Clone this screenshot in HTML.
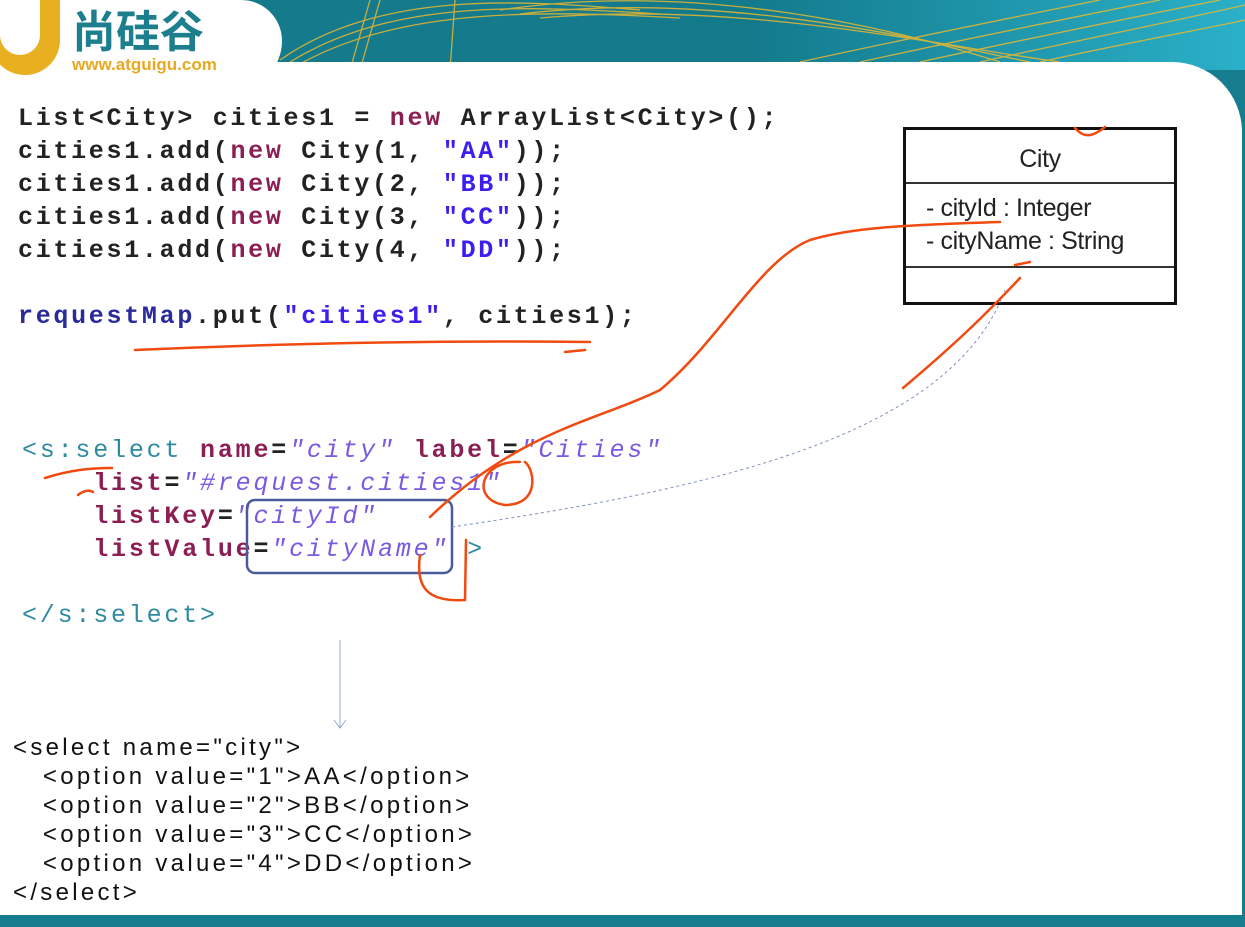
<!DOCTYPE html>
<html><head><meta charset="utf-8"><style>
body{margin:0;width:1245px;height:927px;overflow:hidden;background:#167d8f;position:relative;font-family:"Liberation Sans",sans-serif}
.hdr{position:absolute;left:0;top:0;width:1245px;height:70px;background:linear-gradient(90deg,#167a8c 0%,#137a8c 60%,#2ab0c8 100%)}
.panel{position:absolute;left:0;top:62px;width:1242px;height:853px;background:#fff;border-top-right-radius:70px}
.logo{position:absolute;left:0;top:0;width:282px;height:90px;background:#fff;border-bottom-right-radius:60px;border-top-right-radius:50px}
.code{position:absolute;font-family:"Liberation Mono",monospace;font-weight:bold;font-size:25px;letter-spacing:2.7px;line-height:33px;white-space:pre;color:#222}
.kw{color:#8b1e52}.str{color:#3a1ff0}.blue{color:#2a2a9a}
.t{color:#2e8aa0;font-weight:normal}.a{color:#8b1e52}.v{color:#7a5ae0;font-style:italic;font-weight:normal}
.html{position:absolute;left:13px;top:733px;font-size:24px;line-height:29px;white-space:pre;color:#111;letter-spacing:3.3px}
.uml{position:absolute;left:903px;top:127px;width:268px;height:172px;border:3px solid #111;font-size:25px;color:#222;letter-spacing:-0.4px}
</style></head><body>
<div class="hdr">
<svg width="1245" height="70" style="position:absolute;left:0;top:0">
<g stroke="#e8b830" stroke-width="1.3" fill="none" opacity="0.85">
<path d="M280 60 C380 -10 520 0 640 10"/><path d="M290 62 C390 0 520 5 660 14"/><path d="M300 64 C400 8 540 10 680 18"/>
<path d="M500 10 C700 -20 900 30 1000 62"/><path d="M520 14 C720 -10 920 40 1030 62"/><path d="M540 18 C740 0 940 46 1060 62"/>
<path d="M800 62 C900 40 1000 20 1100 0"/><path d="M860 62 C960 40 1060 20 1160 0"/><path d="M920 62 C1020 40 1120 20 1220 0"/>
<path d="M980 62 C1080 40 1180 20 1245 5"/><path d="M1040 62 C1140 40 1200 30 1245 20"/>
<path d="M350 70 L370 0"/><path d="M360 70 L380 0"/><path d="M450 70 L455 0"/>
</g></svg>
</div>
<div class="panel"></div>
<div class="logo">
<div style="position:absolute;left:-10px;top:-20px;width:70px;height:95px;border-radius:0 0 35px 35px;background:#e8b020"></div>
<div style="position:absolute;left:0;top:-10px;width:40px;height:65px;border-radius:0 0 20px 20px;background:#fff"></div>
<div style="position:absolute;left:72px;top:2px;font-family:'Noto Sans CJK SC',sans-serif;font-size:44px;color:#1d7f8e;font-weight:bold;line-height:52px">尚硅谷</div>
<div style="position:absolute;left:72px;top:55px;font-size:17px;color:#e8a820;font-weight:bold">www.atguigu.com</div>
</div>
<div class="code" style="left:18px;top:102px">List&lt;City&gt; cities1 = <span class="kw">new</span> ArrayList&lt;City&gt;();
cities1.add(<span class="kw">new</span> City(1, <span class="str">"AA"</span>));
cities1.add(<span class="kw">new</span> City(2, <span class="str">"BB"</span>));
cities1.add(<span class="kw">new</span> City(3, <span class="str">"CC"</span>));
cities1.add(<span class="kw">new</span> City(4, <span class="str">"DD"</span>));

<span class="blue">requestMap</span>.put(<span class="str">"cities1"</span>, cities1);</div>
<div class="code" style="left:22px;top:434px;letter-spacing:2.8px"><span class="t">&lt;s:select</span> <span class="a">name</span>=<span class="v">"city"</span> <span class="a">label</span>=<span class="v">"Cities"</span>
    <span class="a">list</span>=<span class="v">"#request.cities1"</span>
    <span class="a">listKey</span>=<span class="v">"cityId"</span>
    <span class="a">listValue</span>=<span class="v">"cityName"</span> <span class="t">&gt;</span>

<span class="t">&lt;/s:select&gt;</span></div>
<div class="html">&lt;select name="city"&gt;
   &lt;option value="1"&gt;AA&lt;/option&gt;
   &lt;option value="2"&gt;BB&lt;/option&gt;
   &lt;option value="3"&gt;CC&lt;/option&gt;
   &lt;option value="4"&gt;DD&lt;/option&gt;
&lt;/select&gt;</div>
<div class="uml">
<div style="height:52px;line-height:58px;text-align:center;border-bottom:2px solid #333">City</div>
<div style="height:84px;border-bottom:2px solid #333;padding-left:20px;line-height:33px;padding-top:8px;box-sizing:border-box">- cityId : Integer<br>- cityName : String</div>
</div>
<svg width="1245" height="927" style="position:absolute;left:0;top:0">
<rect x="247" y="500" width="205" height="73" rx="8" fill="none" stroke="#4a5a9a" stroke-width="2.5"/>
<path d="M452 527 C700 490 950 440 1005 290" stroke="#8090c0" stroke-width="1" fill="none" stroke-dasharray="3 3"/>
<path d="M340 640 L340 728 M334 720 L340 728 L346 720" stroke="#90a8d0" stroke-width="1" fill="none"/>
<g stroke="#f04a10" stroke-width="2.5" fill="none" stroke-linecap="round">
<path d="M135 350 C250 345 400 340 590 342"/><path d="M565 352 L585 350"/>
<path d="M430 517 C520 430 600 420 660 390 C720 340 760 260 810 240 C850 228 900 225 1000 222"/>
<path d="M520 462 C480 460 470 500 505 505 C540 505 535 470 525 462"/>
<path d="M903 388 C960 340 990 310 1020 278"/><path d="M1015 265 L1030 262"/>
<path d="M45 478 C70 470 90 468 112 468"/><path d="M78 495 C84 490 90 490 93 492"/>
<path d="M420 555 C415 590 430 602 465 600 L466 540"/><path d="M1075 128 C1085 140 1095 135 1105 127"/>
</g></svg>
</body></html>
